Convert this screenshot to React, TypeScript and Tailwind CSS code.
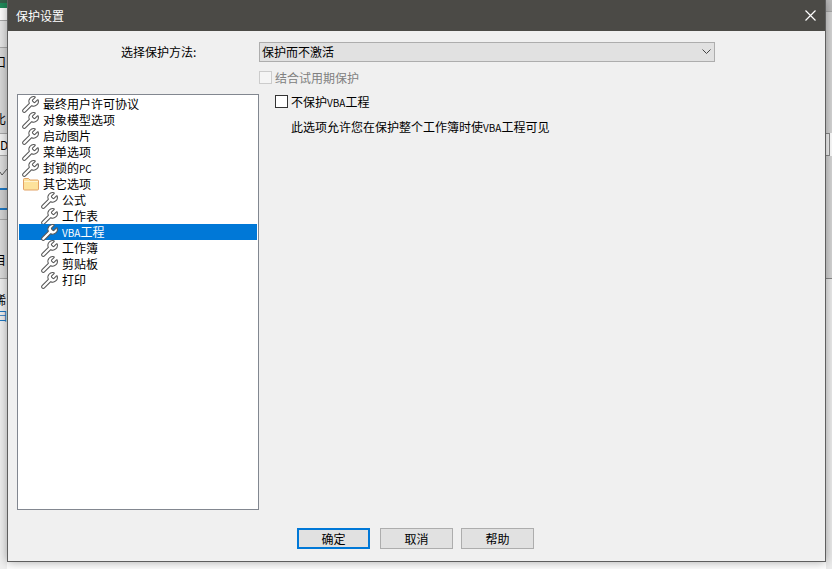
import React from 'react';
import { Wrench } from 'lucide-react';

const FONT = "font-['Noto_Sans_CJK_SC','Liberation_Sans',sans-serif]";

const WrenchIcon: React.FC = () => (
    <Wrench className="w-[19px] h-[19px] -mx-px shrink-0 fill-white text-[#555]" strokeWidth={1.3} />
);

const FolderIcon: React.FC = () => (
    <svg className="w-4 h-4 shrink-0" viewBox="0 0 16 16">
        <path d="M0.5 3.5a1 1 0 0 1 1-1h4l1.5 1.5h7.5a1 1 0 0 1 1 1v8a1 1 0 0 1-1 1h-13a1 1 0 0 1-1-1z" fill="#fde29b" stroke="#e2a266" />
        <path d="M1 5.5h14" stroke="#fff3cf" />
    </svg>
);

const TreeRow: React.FC<{ label: React.ReactNode; child?: boolean; selected?: boolean; folder?: boolean }> = ({ label, child, selected, folder }) => (
    <div className={`h-4 flex items-center text-xs leading-none ${child ? 'pl-[22px]' : 'pl-[3px]'} ${selected ? 'bg-[#0078d7] text-white' : 'text-black'}`}>
        {folder ? <div className="w-[17px] flex justify-center"><FolderIcon /></div> : <WrenchIcon />}
        <span className="ml-1 whitespace-nowrap">{label}</span>
    </div>
);

const Button: React.FC<{ label: string; primary?: boolean }> = ({ label, primary }) => (
    <button className={`w-[73px] h-[21px] bg-[#e1e1e1] text-xs text-black flex items-center justify-center ${primary ? 'border-2 border-[#0078d7]' : 'border border-[#adadad]'}`}>
        {label}
    </button>
);

const App: React.FC = () => {
    return (
        <div className={`w-[832px] h-[569px] overflow-hidden flex bg-white ${FONT}`}>
            {/* Main window showing behind the dialog, left side */}
            <div className="w-[7px] shrink-0 flex flex-col text-xs leading-none overflow-hidden">
                <div className="h-[3px] bg-[#35604a]" />
                <div className="h-[5px] bg-[#1f8a5a]" />
                <div className="h-3 bg-white" />
                <div className="h-[27px] bg-[#e6e6e6] border-t border-[#a8a8a8]" />
                <div className="h-[86px] bg-[#d9d9d9] border-t border-[#a8a8a8] flex flex-col justify-between py-2">
                    <span className="-ml-1.5 h-3 whitespace-nowrap">口</span>
                    <span className="-ml-1.5 h-3 whitespace-nowrap">比</span>
                </div>
                <div className="h-[22px] bg-[#f2f2f2] border-t border-[#a8a8a8] flex items-center"><span>D</span></div>
                <div className="h-[33px] bg-[#dedede] border-t border-[#a8a8a8] flex items-center">
                    <svg className="w-[7px] h-3" viewBox="0 0 7 12"><path d="M0 6l2 3 5-6" fill="none" stroke="#555" /></svg>
                </div>
                <div className="h-5 bg-[#cfcfcf] border-t-2 border-[#1f78c1]" />
                <div className="h-[11px] bg-[#d4d4d4] border-t-2 border-[#1f78c1]" />
                <div className="h-[59px] bg-[#dcdcdc] border-t border-[#a8a8a8] flex items-end pb-3"><span className="-ml-1.5">目</span></div>
                <div className="flex-1 bg-[#f0f0f0] border-t border-[#a8a8a8] flex flex-col pt-[15px] gap-1">
                    <span className="-ml-1.5 whitespace-nowrap">稀</span>
                    <span className="-ml-1 whitespace-nowrap text-[#1f78c1]">日</span>
                </div>
            </div>

            {/* Dialog */}
            <div className="relative z-10 w-[819px] h-[562px] shrink-0 flex flex-col bg-[#f0f0f0] border-x border-b border-[#5f5f5f] shadow-[0_0_10px_rgba(0,0,0,0.35)]">
                <div className="h-[31px] shrink-0 bg-[#4b4a46] flex items-center justify-between pl-2 pr-[9px]">
                    <span className="text-xs text-white">保护设置</span>
                    <svg className="w-[11px] h-[11px]" viewBox="0 0 11 11">
                        <path d="M0.5 0.5l10 10M10.5 0.5l-10 10" stroke="#fff" strokeWidth="1.2" />
                    </svg>
                </div>

                <div className="flex items-center mt-[11px] h-5 pl-[113px]">
                    <span className="w-[138px] text-xs leading-none text-black whitespace-nowrap">选择保护方法:</span>
                    <div className="w-[456px] h-5 bg-[#e1e1e1] border border-[#adadad] flex items-center justify-between pl-[2px] pr-[3px] text-xs text-black">
                        <span>保护而不激活</span>
                        <svg className="w-[9px] h-[6px]" viewBox="0 0 9 6"><path d="M0.5 0.5l4 4 4-4" fill="none" stroke="#444" /></svg>
                    </div>
                </div>

                <div className="flex items-center mt-[9px] h-[13px] pl-[251px] gap-[3px]">
                    <div className="w-[13px] h-[13px] bg-[#f5f5f5] border border-[#cccccc]" />
                    <span className="text-xs text-[#808080] whitespace-nowrap">结合试用期保护</span>
                </div>

                <div className="flex mt-[10px] pl-[9px] gap-4">
                    <div className="w-[242px] h-[416px] bg-white border border-[#828790] p-px flex flex-col">
                        <TreeRow label="最终用户许可协议" />
                        <TreeRow label="对象模型选项" />
                        <TreeRow label="启动图片" />
                        <TreeRow label="菜单选项" />
                        <TreeRow label={<>封锁的<span className="text-[10px]">PC</span></>} />
                        <TreeRow label="其它选项" folder />
                        <TreeRow label="公式" child />
                        <TreeRow label="工作表" child />
                        <TreeRow label={<><span className="text-[10px]">VBA</span>工程</>} child selected />
                        <TreeRow label="工作簿" child />
                        <TreeRow label="剪贴板" child />
                        <TreeRow label="打印" child />
                    </div>
                    <div className="flex flex-col pt-px">
                        <div className="flex items-center h-[13px] gap-[3px]">
                            <div className="w-[13px] h-[13px] bg-white border border-[#333333]" />
                            <span className="text-xs text-black whitespace-nowrap">不保护<span className="text-[10px]">VBA</span>工程</span>
                        </div>
                        <span className="mt-[10px] ml-4 text-xs leading-[18px] text-black whitespace-nowrap">此选项允许您在保护整个工作簿时使<span className="text-[10px]">VBA</span>工程可见</span>
                    </div>
                </div>

                <div className="flex mt-[18px] pl-[289px] gap-[10px]">
                    <Button label="确定" primary />
                    <Button label="取消" />
                    <div className="-ml-[2px]"><Button label="帮助" /></div>
                </div>
            </div>

            {/* Main window showing behind the dialog, right side */}
            <div className="flex-1 flex flex-col">
                <div className="h-[11px] bg-[#bdbdbd]" />
                <div className="h-[122px] bg-[#d6d6d6] border-t border-[#a8a8a8]" />
                <div className="h-[23px] bg-[#f5f5f5] border border-l-0 border-[#8a8a8a] mr-[2px]" />
                <div className="h-[122px] bg-[#d6d6d6]" />
                <div className="flex-1 bg-[#ececec] border-t border-[#8a8a8a]" />
            </div>
        </div>
    );
};

export default App;
